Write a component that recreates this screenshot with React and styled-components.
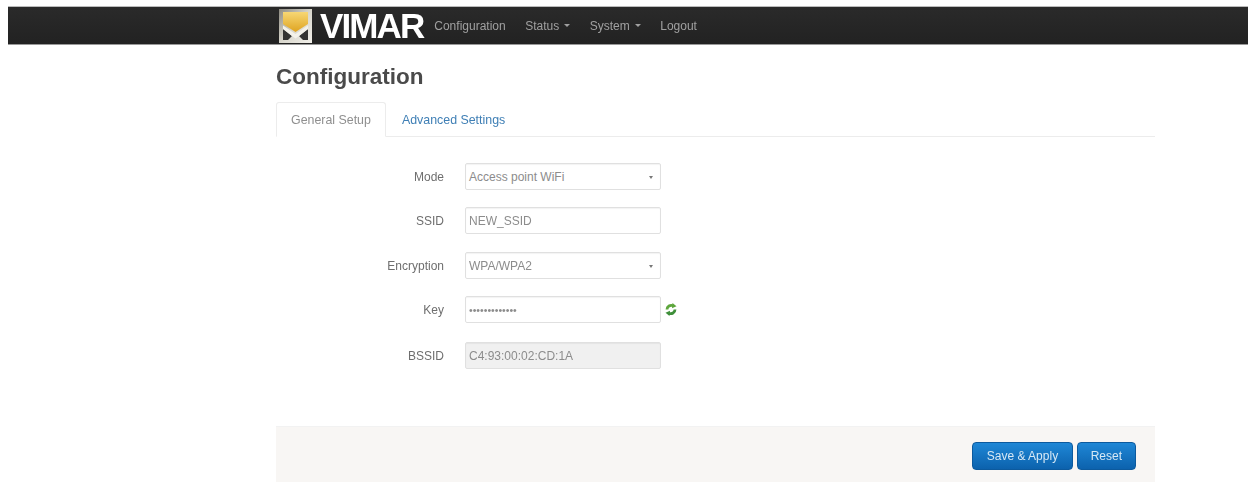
import React from "react";
import styled, { createGlobalStyle } from "styled-components";

const GlobalStyle = createGlobalStyle`
  html, body {
    margin: 0;
    padding: 0;
    background: #fff;
  }
  body {
    font-family: "Liberation Sans", Arial, sans-serif;
    font-size: 12px;
    color: #555;
  }
`;

const VimarMark = () => (
  <svg width="33" height="34" viewBox="0 0 33 34">
    <defs>
      <linearGradient id="frame" x1="0" y1="0" x2="1" y2="1">
        <stop offset="0" stopColor="#8d8a80" />
        <stop offset="0.5" stopColor="#d8d6cc" />
        <stop offset="1" stopColor="#f2f0ea" />
      </linearGradient>
      <linearGradient id="gold" x1="0" y1="0" x2="0" y2="1">
        <stop offset="0" stopColor="#f7d774" />
        <stop offset="1" stopColor="#dfa421" />
      </linearGradient>
    </defs>
    <rect width="33" height="34" fill="url(#frame)" />
    <path d="M4 3h25v12L16.500 23 4 15z" fill="url(#gold)" />
    <path d="M4 20l9 7-4 4H4z" fill="#343432" />
    <path d="M29 20l-9 7 4 4h5z" fill="#343432" />
    <path d="M4 16.500l12.500 8.500L29 16.500V20l-9 7-3.500 2.500L13 27 4 20z" fill="#f4f2ea" />
  </svg>
);

const RefreshIcon = () => (
  <svg width="12" height="13" viewBox="0 0 12 13">
    <path d="M2 6.500C2 3.500 5 1.500 8.500 2.800" fill="none" stroke="#5da63c" strokeWidth="2.800" />
    <path d="M7.500 0l4 3.200-4.500 2z" fill="#5da63c" />
    <path d="M10 6.500c0 3-3 5-6.500 3.700" fill="none" stroke="#3f8f3a" strokeWidth="2.800" />
    <path d="M4.500 13L.5 9.800l4.500-2z" fill="#3f8f3a" />
  </svg>
);

const App = () => (
  <>
    <GlobalStyle />
    <Page>
      <NavBar>
        <NavInner>
          <Brand>
            <VimarMark />
            <BrandName>VIMAR</BrandName>
          </Brand>
          <NavLink>Configuration</NavLink>
          <NavLink>Status<Caret /></NavLink>
          <NavLink>System<Caret /></NavLink>
          <NavLink>Logout</NavLink>
        </NavInner>
      </NavBar>

      <Container>
        <Title>Configuration</Title>
        <Tabs>
          <Tab $active>General Setup</Tab>
          <Tab>Advanced Settings</Tab>
        </Tabs>

        <Form>
          <Row $mb={17}>
            <Label>Mode</Label>
            <Control>
              <Field>Access point WiFi<SelectArrow /></Field>
            </Control>
          </Row>
          <Row $mb={18}>
            <Label>SSID</Label>
            <Control><Field>NEW_SSID</Field></Control>
          </Row>
          <Row $mb={17}>
            <Label>Encryption</Label>
            <Control>
              <Field>WPA/WPA2<SelectArrow /></Field>
            </Control>
          </Row>
          <Row $mb={19}>
            <Label>Key</Label>
            <Control>
              <Field $small>•••••••••••••</Field>
              <RefreshIcon />
            </Control>
          </Row>
          <Row>
            <Label>BSSID</Label>
            <Control><Field $disabled>C4:93:00:02:CD:1A</Field></Control>
          </Row>
        </Form>

        <Footer>
          <Button $px={13.5}>Save &amp; Apply</Button>
          <Button $px={13}>Reset</Button>
        </Footer>
      </Container>
    </Page>
  </>
);

const Page = styled.div`
  width: 1248px;
  height: 482px;
  overflow: hidden;
  filter: blur(0.6px);
`;

const NavBar = styled.header`
  margin: 7px 0 0 8px;
  height: 37px;
  background: linear-gradient(#2a2a2a, #222);
  box-shadow: 0 -1px 0 #bbb, 0 1px 0 #999;
`;

const NavInner = styled.nav`
  display: flex;
  align-items: center;
  height: 100%;
  padding-left: 271px;
`;

const Brand = styled.div`
  display: flex;
  align-items: center;
  gap: 8px;
  margin-right: 11px;
`;

const BrandName = styled.span`
  font-size: 35px;
  font-weight: 700;
  letter-spacing: -1.9px;
  color: #fff;
  line-height: 37px;
`;

const NavLink = styled.a`
  display: flex;
  align-items: center;
  font-size: 12px;
  color: #a0a0a0;
  margin-right: 19.5px;
`;

const Caret = styled.span`
  display: inline-block;
  margin-left: 5px;
  border-top: 3px solid #a0a0a0;
  border-left: 3px solid transparent;
  border-right: 3px solid transparent;
`;

const Container = styled.main`
  width: 879px;
  margin-left: 276px;
`;

const Title = styled.h1`
  margin: 21px 0 0;
  font-size: 22.5px;
  line-height: 24px;
  font-weight: 700;
  color: #4a4a4a;
`;

const Tabs = styled.div`
  display: flex;
  margin-top: 13px;
  height: 35px;
  border-bottom: 1px solid #ececec;
  box-sizing: border-box;
`;

const Tab = styled.div`
  display: flex;
  align-items: center;
  box-sizing: border-box;
  height: 35px;
  padding: 0 14px;
  margin-right: 1px;
  font-size: 12.4px;
  color: ${(p) => (p.$active ? "#8f8f8f" : "#3f7fb5")};
  background: ${(p) => (p.$active ? "#fff" : "transparent")};
  border: 1px solid ${(p) => (p.$active ? "#ececec" : "transparent")};
  border-bottom-color: ${(p) => (p.$active ? "#fff" : "transparent")};
  border-radius: 3px 3px 0 0;
`;

const Form = styled.section`
  padding-top: 26px;
  height: 289px;
  box-sizing: border-box;
`;

const Row = styled.div`
  display: flex;
  align-items: center;
  height: 27px;
  margin-bottom: ${(p) => p.$mb || 0}px;
`;

const Label = styled.label`
  width: 168px;
  text-align: right;
  font-size: 12px;
  color: #6e6e6e;
`;

const Control = styled.div`
  display: flex;
  align-items: center;
  gap: 4px;
  margin-left: 21px;
`;

const Field = styled.div`
  position: relative;
  display: flex;
  align-items: center;
  box-sizing: border-box;
  width: 196px;
  height: 27px;
  padding: 0 3px;
  font-size: ${(p) => (p.$small ? "10.5px" : "12px")};
  color: #8c8c8c;
  background: ${(p) => (p.$disabled ? "#f0f0f0" : "#fff")};
  border: 1px solid #e0e0e0;
  border-radius: 2px;
  box-shadow: inset 0 1px 1px rgba(0, 0, 0, 0.05);
`;

const SelectArrow = styled.span`
  position: absolute;
  right: 7px;
  top: 12px;
  border-top: 3px solid #777;
  border-left: 2px solid transparent;
  border-right: 2px solid transparent;
`;

const Footer = styled.footer`
  display: flex;
  justify-content: flex-end;
  gap: 4px;
  height: 56px;
  box-sizing: border-box;
  padding: 15px 19px 0 0;
  background: #f8f6f4;
  border-top: 1px solid #f2f2f2;
`;

const Button = styled.button`
  height: 28px;
  padding: 0 ${(p) => p.$px}px;
  font-family: inherit;
  font-size: 12px;
  color: #d6e8f5;
  background: linear-gradient(#1f87d6, #0c62ad);
  border: 1px solid #0c5a9e;
  border-radius: 4px;
`;

export default App;
